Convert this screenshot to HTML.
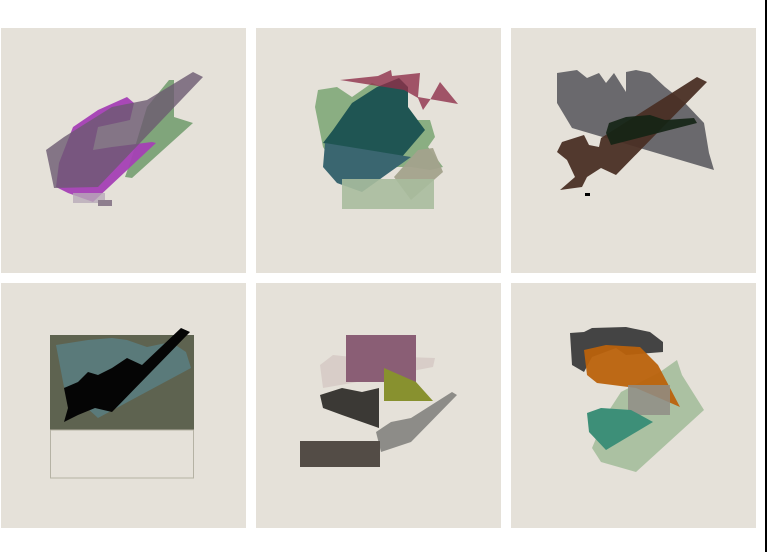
<!DOCTYPE html>
<html><head><meta charset="utf-8"><style>
html,body{margin:0;padding:0;background:#fff;width:767px;height:552px;overflow:hidden}
</style></head><body>
<svg width="767" height="552" viewBox="0 0 767 552" xmlns="http://www.w3.org/2000/svg" style="display:block">
<rect x="765" y="0" width="2" height="552" fill="#000"/>
<g fill="#e5e1d9">
<rect x="1" y="28" width="245" height="245"/>
<rect x="256" y="28" width="245" height="245"/>
<rect x="511" y="28" width="245" height="245"/>
<rect x="1" y="283" width="245" height="245"/>
<rect x="256" y="283" width="245" height="245"/>
<rect x="511" y="283" width="245" height="245"/>
</g>
<!-- panel 1 -->
<polygon points="125,177 131,160 147,107 169,80 174,80 174,117 193,123 132,178" fill="#6f9a6a" opacity="0.85"/>
<polygon points="56,187 59,163 73,127 98,110 127,97 134,103 130,120 98,127 93,150 112,147 152,142 156,143 93,202 68,193" fill="#a43fb5" opacity="0.95"/>
<polygon points="46,150 64,137 112,107 147,100 193,72 203,77 98,187 54,188" fill="#6b5a70" opacity="0.8"/>
<rect x="73" y="193" width="32" height="10" fill="#b8aab8" opacity="0.8"/>
<rect x="98" y="200" width="14" height="6" fill="#8e7e8e"/>
<!-- panel 2 -->
<polygon points="318,90 337,87 352,97 372,83 396,93 406,120 430,120 435,137 428,147 443,167 430,170 411,167 381,167 342,177 323,147 315,107" fill="#7fa878" opacity="0.9"/>
<polygon points="394,177 418,150 433,148 443,172 411,200" fill="#a3a28c" opacity="0.95"/>
<polygon points="333,130 352,103 377,87 399,78 408,87 408,107 425,130 401,158 323,143" fill="#1f5553"/>
<polygon points="325,143 411,157 362,192 337,183 323,167" fill="#3a6670"/>
<polygon points="340,80 378,76 391,70 392,76 420,73 418,97 458,104 440,82 430,100 423,110 418,98 404,90" fill="#8f2f4a" opacity="0.8"/>
<rect x="342" y="179" width="92" height="30" fill="#a9bd9d" opacity="0.9"/>
<!-- panel 3 -->
<polygon points="557,73 577,70 587,78 599,73 606,83 614,73 626,92 626,72 636,70 650,73 665,87 685,103 704,123 709,153 714,170 572,128 557,103" fill="#5c5c60" opacity="0.9"/>
<polygon points="560,190 575,177 567,160 557,152 562,142 584,135 589,145 599,147 601,138 697,77 707,82 616,175 601,168 587,177 582,187" fill="#4a2f25" opacity="0.95"/>
<polygon points="609,123 626,117 650,115 665,120 694,118 697,123 611,145 606,133" fill="#142414" opacity="0.9"/>
<rect x="585" y="193" width="5" height="3" fill="#000"/>
<!-- panel 4 -->
<rect x="50" y="335" width="144" height="95" fill="#5e6350"/>
<rect x="50.5" y="430" width="143" height="48" fill="none" stroke="#b5b2a4" stroke-width="1"/>
<polygon points="56,345 88,340 112,338 127,340 147,347 171,342 186,352 191,368 98,418 64,387" fill="#5a7a7a"/>
<polygon points="64,422 68,408 64,388 78,382 88,372 98,375 112,368 127,358 142,365 181,328 190,332 112,412 95,408 78,415" fill="#050505"/>
<!-- panel 5 -->
<polygon points="320,365 333,355 352,357 372,357 406,357 435,358 433,367 391,375 352,383 323,388" fill="#d8cdc8"/>
<rect x="346" y="335" width="70" height="47" fill="#8a5e75"/>
<polygon points="384,368 416,382 433,401 384,401" fill="#88912f"/>
<polygon points="320,395 342,388 362,392 379,388 379,428 342,415 323,408" fill="#3b3935"/>
<polygon points="376,432 391,422 411,418 452,392 457,395 411,442 381,452" fill="#8d8c88"/>
<rect x="300" y="441" width="80" height="26" fill="#534c46"/>
<!-- panel 6 -->
<polygon points="570,333 584,332 592,328 626,327 650,332 663,342 663,352 626,355 616,348 592,357 584,372 572,365" fill="#444"/>
<polygon points="606,415 621,392 660,372 677,360 682,375 704,410 636,472 601,462 592,448" fill="#a1bb98" opacity="0.85"/>
<polygon points="584,350 606,345 640,347 658,365 680,407 636,388 597,383 587,375" fill="#bb620c" opacity="0.95"/>
<rect x="628" y="385" width="42" height="30" fill="#8f8d86" opacity="0.85"/>
<polygon points="587,413 601,408 631,410 653,422 606,450 589,432" fill="#3d8f78"/>
</svg>
</body></html>
